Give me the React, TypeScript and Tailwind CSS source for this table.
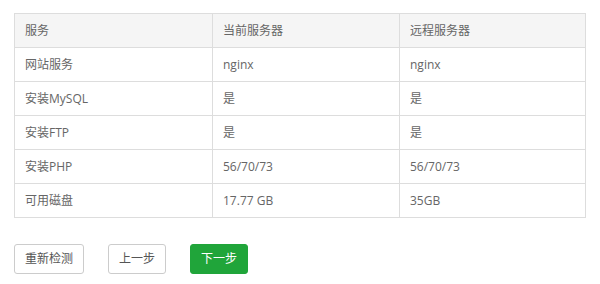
const rows: [string, string, string][] = [
  ["网站服务", "nginx", "nginx"],
  ["安装MySQL", "是", "是"],
  ["安装FTP", "是", "是"],
  ["安装PHP", "56/70/73", "56/70/73"],
  ["可用磁盘", "17.77 GB", "35GB"],
];

function Cell({ children }: { children: React.ReactNode }) {
  return (
    <td className="h-[34px] border border-[#ddd] px-[10px] align-middle">
      {children}
    </td>
  );
}

export default function App() {
  return (
    <div
      className="h-[284px] w-[600px] bg-white px-[14px] pt-[13px] text-[12px] text-[#666]"
      style={{ fontFamily: '"Open Sans", "Noto Sans CJK SC", sans-serif' }}
    >
      <table className="w-[571px] table-fixed border-collapse">
        <colgroup>
          <col className="w-[198px]" />
          <col className="w-[187px]" />
          <col className="w-[186px]" />
        </colgroup>
        <thead>
          <tr className="bg-[#f5f5f5]">
            <Cell>服务</Cell>
            <Cell>当前服务器</Cell>
            <Cell>远程服务器</Cell>
          </tr>
        </thead>
        <tbody>
          {rows.map(([name, local, remote]) => (
            <tr key={name}>
              <Cell>{name}</Cell>
              <Cell>{local}</Cell>
              <Cell>{remote}</Cell>
            </tr>
          ))}
        </tbody>
      </table>

      <div className="mt-[26px] flex gap-[24px]">
        <button className="h-[30px] w-[70px] rounded-[3px] border border-[#ccc] bg-white text-[12px] text-[#555]">
          重新检测
        </button>
        <button className="h-[30px] w-[58px] rounded-[3px] border border-[#ccc] bg-white text-[12px] text-[#555]">
          上一步
        </button>
        <button className="h-[30px] w-[58px] rounded-[3px] border border-[#20a53a] bg-[#20a53a] text-[12px] text-white">
          下一步
        </button>
      </div>
    </div>
  );
}
